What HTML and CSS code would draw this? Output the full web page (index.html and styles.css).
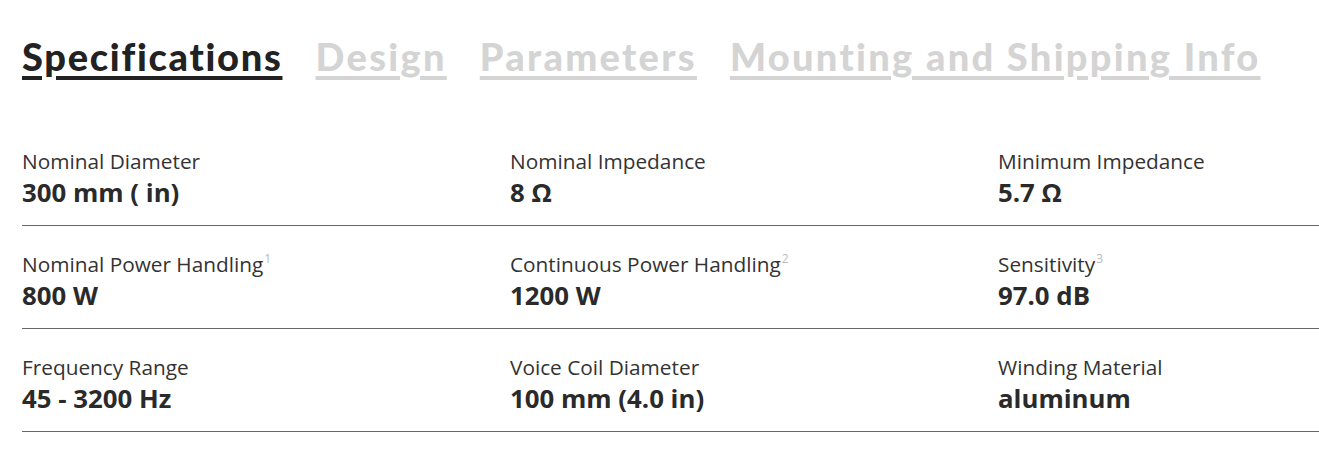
FILE: index.html
```html
<!DOCTYPE html>
<html lang="en">
<head>
<meta charset="utf-8">
<title>Specifications</title>
<link rel="stylesheet" href="styles.css">
</head>
<body>
<div class="page">
  <nav class="tabs">
    <a class="tab active" href="#">Specifications</a>
    <a class="tab" href="#">Design</a>
    <a class="tab" href="#">Parameters</a>
    <a class="tab" href="#">Mounting and Shipping Info</a>
  </nav>
  <div class="specs">
    <div class="row">
      <div class="cell"><div class="label">Nominal Diameter</div><div class="value">300 mm ( in)</div></div>
      <div class="cell"><div class="label">Nominal Impedance</div><div class="value">8 Ω</div></div>
      <div class="cell"><div class="label">Minimum Impedance</div><div class="value">5.7 Ω</div></div>
    </div>
    <div class="row">
      <div class="cell"><div class="label">Nominal Power Handling<sup>1</sup></div><div class="value">800 W</div></div>
      <div class="cell"><div class="label">Continuous Power Handling<sup>2</sup></div><div class="value">1200 W</div></div>
      <div class="cell"><div class="label">Sensitivity<sup>3</sup></div><div class="value">97.0 dB</div></div>
    </div>
    <div class="row">
      <div class="cell"><div class="label">Frequency Range</div><div class="value">45 - 3200 Hz</div></div>
      <div class="cell"><div class="label">Voice Coil Diameter</div><div class="value">100 mm (4.0 in)</div></div>
      <div class="cell"><div class="label">Winding Material</div><div class="value">aluminum</div></div>
    </div>
  </div>
</div>
</body>
</html>
```
FILE: styles.css
```css
html, body {
  margin: 0;
  padding: 0;
  background: #fff;
}
.page {
  padding: 30px 0 0 22px;
  font-family: "Open Sans", "Liberation Sans", sans-serif;
  color: #333;
}
.tabs {
  display: flex;
  gap: 33px;
  white-space: nowrap;
}
.tab {
  font-family: "Lato", "DejaVu Sans", sans-serif;
  font-weight: 900;
  font-size: 38px;
  letter-spacing: 2.3px;
  line-height: 52px;
  color: #d4d4d4;
  text-decoration: underline;
  text-decoration-thickness: 4px;
  text-underline-offset: 5px;
}
.tab.active {
  color: #222;
  letter-spacing: 1.7px;
}
.specs {
  margin-top: 41px;
}
.row {
  display: grid;
  grid-template-columns: 488px 488px 1fr;
  border-bottom: 1px solid #666;
  padding: 24px 0 16px;
}
.label {
  font-size: 20.8px;
  line-height: 28px;
  color: #333;
  white-space: nowrap;
}
.label sup {
  font-size: 12px;
  line-height: 0;
  color: #bbb;
  vertical-align: 0;
  position: relative;
  top: -9px;
  margin-left: 1px;
}
.value {
  font-size: 25.8px;
  font-weight: 700;
  line-height: 34px;
  color: #2a2a2a;
  white-space: nowrap;
}
```
